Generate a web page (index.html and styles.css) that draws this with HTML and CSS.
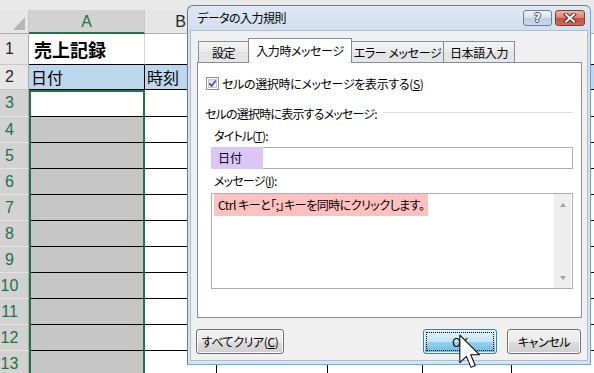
FILE: index.html
```html
<!DOCTYPE html>
<html lang="ja">
<head>
    <meta charset="UTF-8">
    <title>データの入力規則</title>
    <link rel="stylesheet" href="styles.css">
</head>
<body>
<div class="screen">
    <div class="topband"></div>
    <div class="sheet">
        <div class="corner"><span class="corner-mark"></span></div>
        <div class="col-head sel">A</div>
        <div class="col-head">B</div>
        <div class="col-head"></div>
        <div class="col-head"></div>
        <div class="col-head"></div>
        <div class="col-head"></div>

        <div class="row-head">1</div>
        <div class="cell above caption">売上記録</div>
        <div class="cell above"></div><div class="cell above"></div><div class="cell above"></div><div class="cell above"></div><div class="cell above"></div>

        <div class="row-head">2</div>
        <div class="cell tb th">日付</div>
        <div class="cell tb th">時刻</div>
        <div class="cell tb th"></div><div class="cell tb th"></div><div class="cell tb th"></div><div class="cell tb th"></div>

        <div class="row-head sel">3</div>
        <div class="cell tb"></div><div class="cell tb"></div><div class="cell tb"></div><div class="cell tb"></div><div class="cell tb"></div><div class="cell tb"></div>

        <div class="row-head sel">4</div>
        <div class="cell tb shade"></div><div class="cell tb"></div><div class="cell tb"></div><div class="cell tb"></div><div class="cell tb"></div><div class="cell tb"></div>
        <div class="row-head sel">5</div>
        <div class="cell tb shade"></div><div class="cell tb"></div><div class="cell tb"></div><div class="cell tb"></div><div class="cell tb"></div><div class="cell tb"></div>
        <div class="row-head sel">6</div>
        <div class="cell tb shade"></div><div class="cell tb"></div><div class="cell tb"></div><div class="cell tb"></div><div class="cell tb"></div><div class="cell tb"></div>
        <div class="row-head sel">7</div>
        <div class="cell tb shade"></div><div class="cell tb"></div><div class="cell tb"></div><div class="cell tb"></div><div class="cell tb"></div><div class="cell tb"></div>
        <div class="row-head sel">8</div>
        <div class="cell tb shade"></div><div class="cell tb"></div><div class="cell tb"></div><div class="cell tb"></div><div class="cell tb"></div><div class="cell tb"></div>
        <div class="row-head sel">9</div>
        <div class="cell tb shade"></div><div class="cell tb"></div><div class="cell tb"></div><div class="cell tb"></div><div class="cell tb"></div><div class="cell tb"></div>
        <div class="row-head sel">10</div>
        <div class="cell tb shade"></div><div class="cell tb"></div><div class="cell tb"></div><div class="cell tb"></div><div class="cell tb"></div><div class="cell tb"></div>
        <div class="row-head sel">11</div>
        <div class="cell tb shade"></div><div class="cell tb"></div><div class="cell tb"></div><div class="cell tb"></div><div class="cell tb"></div><div class="cell tb"></div>
        <div class="row-head sel">12</div>
        <div class="cell tb shade"></div><div class="cell tb"></div><div class="cell tb"></div><div class="cell tb"></div><div class="cell tb"></div><div class="cell tb"></div>
        <div class="row-head sel">13</div>
        <div class="cell tb shade"></div><div class="cell tb"></div><div class="cell tb"></div><div class="cell tb"></div><div class="cell tb"></div><div class="cell tb"></div>

        <!-- selected range A3:A13 -->
        <div class="selection"></div>
    </div>

    <div class="dialog">
        <div class="titlebar">
            <span class="title-text">データの入力規則</span>
            <div class="caption-btns">
                <span class="cap-btn help">?</span>
                <span class="cap-btn close">
                    <svg width="14" height="10" viewBox="0 0 14 10">
                        <path d="M3 1.5 L11 8.5 M11 1.5 L3 8.5" stroke="#5a2b26" stroke-width="4" stroke-linecap="square"/>
                        <path d="M3 1.5 L11 8.5 M11 1.5 L3 8.5" stroke="#fff" stroke-width="2" stroke-linecap="square"/>
                    </svg>
                </span>
            </div>
        </div>

        <div class="client">
            <div class="tabs">
                <div class="tab first">設定</div>
                <div class="tab active">入力時メッセージ</div>
                <div class="tab">エラー メッセージ</div>
                <div class="tab">日本語入力</div>
            </div>

            <div class="panel">
                <div class="check-row">
                    <svg class="checkbox" width="13" height="13" viewBox="0 0 13 13">
                        <defs>
                            <linearGradient id="cbg" x1="0" y1="0" x2="1" y2="1">
                                <stop offset="0" stop-color="#dcdcdc"/>
                                <stop offset="1" stop-color="#fbfbfb"/>
                            </linearGradient>
                        </defs>
                        <rect x="0.5" y="0.5" width="12" height="12" fill="#fff" stroke="#8f8f8f"/>
                        <rect x="2.5" y="2.5" width="8" height="8" fill="url(#cbg)" stroke="#c9c9c9"/>
                        <path d="M3.3 6.4 L5.6 8.9 L9.8 3.4" fill="none" stroke="#41568a" stroke-width="1.7"/>
                    </svg>
                    <span class="check-label">セルの選択時にメッセージを表示する(<u>S</u>)</span>
                </div>

                <div class="group-row">
                    <span>セルの選択時に表示するメッセージ:</span>
                    <span class="group-line"></span>
                </div>

                <div class="field-label">タイトル(<u>T</u>):</div>
                <div class="field title-field">
                    <span class="hl-title">日付</span>
                </div>

                <div class="field-label second">メッセージ(<u>I</u>):</div>
                <div class="field message-field">
                    <div class="message-text">
                        <span class="hl-msg">Ctrl キーと「;」キーを同時にクリックします。</span>
                    </div>
                    <div class="scrollbar">
                        <span class="arrow up"></span>
                        <span class="arrow down"></span>
                    </div>
                </div>
            </div>

            <div class="buttons">
                <button class="btn clear">すべてクリア(<u>C</u>)</button>
                <button class="btn ok"><span class="focus">OK</span></button>
                <button class="btn">キャンセル</button>
            </div>
        </div>
    </div>

    <svg class="cursor" width="22" height="36" viewBox="0 0 13 21">
        <path d="M0.5 0.5 V16.8 L4.4 13.1 L7.1 19.6 L9.6 18.5 L6.9 12.1 H12 Z" fill="#fff" stroke="#000" stroke-width="0.6" stroke-linejoin="round"/>
    </svg>
</div>
</body>
</html>
```

FILE: styles.css
```css
body {
    margin: 0;
    background: #fff;
    font-family: "Noto Sans CJK JP", sans-serif;
}

.screen {
    position: relative;
    width: 594px;
    height: 373px;
    overflow: hidden;
    background: #fff;
}

.topband {
    height: 10px;
    background: #e9e9e9;
}

/* spreadsheet */
.sheet {
    position: relative;
    display: grid;
    grid-template-columns: 29px 116px 72px 111px 95px 89px 90px;
    grid-template-rows: 24px 31px 25px 27px repeat(10, 26px);
}

.corner {
    background: #e6e6e6;
    border-right: 1px solid #c8c8c8;
    border-bottom: 1px solid #ababab;
    display: flex;
    align-items: flex-end;
    justify-content: flex-end;
    padding: 0 3px 3px 0;
}

.corner-mark {
    width: 0;
    height: 0;
    border-left: 12px solid transparent;
    border-bottom: 13px solid #b7b7b7;
}

.col-head {
    background: #e6e6e6;
    border-right: 1px solid #c8c8c8;
    border-bottom: 1px solid #ababab;
    font: 16px "Liberation Sans", sans-serif;
    color: #262626;
    display: flex;
    align-items: center;
    justify-content: center;
    padding-top: 1px;
}

.col-head.sel {
    background: #d2d2d2;
    color: #217346;
    border-bottom: 2px solid #217346;
}

.row-head {
    background: #e6e6e6;
    border-right: 1px solid #ababab;
    border-bottom: 1px solid #c8c8c8;
    font: 16px "Liberation Sans", sans-serif;
    color: #262626;
    display: flex;
    align-items: center;
    justify-content: center;
    padding-right: 9px;
}

.row-head.sel {
    background: #d2d2d2;
    color: #217346;
    border-bottom-color: #e4e4e4;
}

.cell {
    background: #fff;
    border-right: 1px solid #d4d4d4;
    border-bottom: 1px solid #d4d4d4;
    display: flex;
    align-items: center;
    white-space: nowrap;
}

.cell.above {
    border-bottom-color: #000;
}

.cell.tb {
    border-right-color: #000;
    border-bottom-color: #000;
}

.caption {
    font-size: 18px;
    font-weight: bold;
    padding-left: 5px;
}

.th {
    background: #bdd7ee;
    font-size: 16px;
    padding-left: 2px;
}

.shade {
    background: #c6c6c6;
}

.selection {
    position: absolute;
    left: 29px;
    top: 80px;
    width: 116px;
    height: 300px;
    box-sizing: border-box;
    border: 2px solid #217346;
    pointer-events: none;
}

/* dialog */
.dialog {
    position: absolute;
    left: 187px;
    top: 5px;
    width: 404px;
    height: 360px;
    box-sizing: border-box;
    border: 1px solid #6b7b90;
    border-right-color: #5fa6dc;
    border-bottom-color: #5ab2e8;
    border-radius: 6px 6px 0 0;
    background: linear-gradient(#dfe8f4, #d2dfee 24px, #d6e3f1);
    padding: 0 2px 3px;
    display: flex;
    flex-direction: column;
    font-size: 12px;
    font-feature-settings: "palt";
    letter-spacing: -0.8px;
    white-space: nowrap;
    color: #000;
}

.titlebar {
    height: 24px;
    display: flex;
    align-items: flex-start;
}

.title-text {
    padding-left: 7px;
    line-height: 24px;
    font-size: 12px;
    letter-spacing: -0.5px;
}

.caption-btns {
    margin: 4px 3px 0 auto;
    display: flex;
    gap: 3px;
}

.cap-btn {
    height: 16px;
    box-sizing: border-box;
    border-radius: 3px;
    display: flex;
    align-items: center;
    justify-content: center;
}

.help {
    width: 29px;
    border: 1px solid #6d7f97;
    background: linear-gradient(#eef3f9, #d5e0ee 50%, #bccde2 50%, #c9d8ea);
    color: #fff;
    font: bold 12px "DejaVu Sans", sans-serif;
    letter-spacing: 0;
    text-shadow: 1px 0 #4b5566, -1px 0 #4b5566, 0 1px #4b5566, 0 -1px #4b5566;
}

.close {
    width: 30px;
    border: 1px solid #8b3b32;
    background: linear-gradient(#edb3a8, #d8806f 50%, #c7503f 50%, #d06a58);
}

.client {
    flex: 1;
    background: #f0f0f0;
    border: 1px solid #aebed2;
    padding: 7px 5px 0 6px;
}

.tabs {
    display: flex;
    align-items: flex-end;
    height: 24px;
    margin-left: 1px;
}

.tab {
    height: 21px;
    box-sizing: border-box;
    border: 1px solid #898c95;
    border-bottom: none;
    margin-left: -1px;
    background: linear-gradient(#f4f4f4, #ebebeb 50%, #e2e2e2 50%, #e6e6e6);
    display: flex;
    align-items: center;
    justify-content: center;
    padding-top: 1px;
    letter-spacing: -0.4px;
}

.tab.first {
    margin-left: 0;
    width: 51px;
}

.tab:nth-child(3) {
    width: 93px;
}

.tab:nth-child(4) {
    width: 72px;
}

.tab.active {
    position: relative;
    z-index: 1;
    width: 104px;
    height: 25px;
    margin-bottom: -1px;
    background: #fff;
    padding-top: 0;
    padding-bottom: 2px;
}

.panel {
    height: 256px;
    box-sizing: border-box;
    border: 1px solid #898c95;
    background: #fff;
    padding: 14px 8px 0 7px;
    display: flex;
    flex-direction: column;
}

.check-row {
    height: 13px;
    margin-left: 1px;
    display: flex;
    align-items: center;
    gap: 3px;
    line-height: 13px;
}

.check-label {
    letter-spacing: -0.35px;
}

.group-row {
    margin-top: 16px;
    height: 14px;
    display: flex;
    align-items: center;
    gap: 6px;
}

.group-line {
    flex: 1;
    height: 1px;
    background: #d5dfe5;
    margin-top: -2px;
}

.field-label {
    margin: 9px 0 0 9px;
    height: 14px;
    line-height: 14px;
}

.field-label.second {
    margin-top: 5px;
}

.field {
    margin: 4px 0 0 6px;
    border: 1px solid #abadb3;
    background: #fff;
    display: flex;
}

.title-field {
    height: 22px;
    box-sizing: border-box;
}

.hl-title {
    width: 45px;
    margin: -1px 0 -1px -1px;
    padding-left: 7px;
    background: #dcc6f7;
    line-height: 22px;
    letter-spacing: 0;
}

.message-field {
    margin-top: 5px;
    height: 96px;
    box-sizing: border-box;
}

.message-text {
    flex: 1;
    padding: 0 2px;
}

.hl-msg {
    display: inline-block;
    background: #ffc0c0;
    padding: 0 4px;
    line-height: 22px;
    letter-spacing: -0.5px;
}

.scrollbar {
    width: 17px;
    margin: 0 1px 0 0;
    background: #eeeeee;
    display: flex;
    flex-direction: column;
    justify-content: space-between;
    align-items: center;
    padding: 9px 0 8px;
}

.arrow {
    width: 0;
    height: 0;
    border-left: 3.5px solid transparent;
    border-right: 3.5px solid transparent;
}

.arrow.up {
    border-bottom: 4px solid #a3a3a3;
}

.arrow.down {
    border-top: 4px solid #a3a3a3;
}

.buttons {
    display: flex;
    gap: 10px;
    margin: 11px 1px 0 -1px;
}

.btn {
    height: 25px;
    width: 74px;
    box-sizing: border-box;
    border: 1px solid #707070;
    border-radius: 3px;
    background: linear-gradient(#f2f2f2, #ebebeb 50%, #dddddd 50%, #cfcfcf);
    box-shadow: inset 0 0 0 1px #fcfcfc;
    font: 12px "Noto Sans CJK JP", sans-serif;
    font-feature-settings: "palt";
    letter-spacing: -0.4px;
    color: #000;
    padding: 0;
}

.btn.clear {
    width: 88px;
    margin-right: auto;
}

.btn.ok {
    border-color: #3c7fb1;
    background: linear-gradient(#e5f4fc, #c4e5f6 50%, #98d1ef 50%, #6cb8e0);
    box-shadow: inset 0 0 0 1px #e8f5fc;
    padding: 2px;
}

.focus {
    display: flex;
    align-items: center;
    justify-content: center;
    height: 100%;
    box-sizing: border-box;
    border: 1px dotted #000;
}

.cursor {
    position: absolute;
    left: 459px;
    top: 334px;
}
```
